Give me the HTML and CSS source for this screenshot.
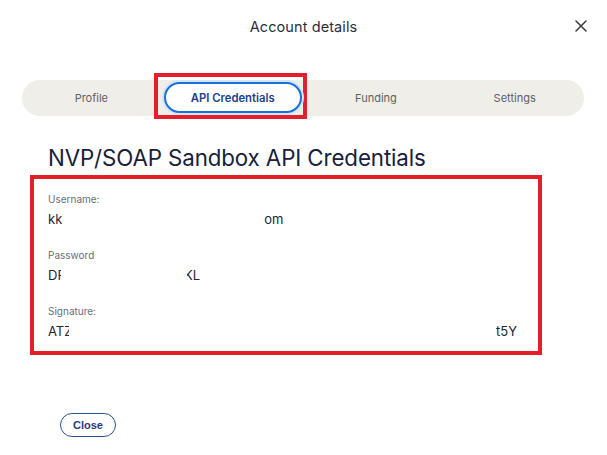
FILE: index.html
```html
<!DOCTYPE html>
<html lang="en">
<head>
<meta charset="utf-8">
<title>Account details</title>
<link rel="stylesheet" href="styles.css">
</head>
<body>
<div class="dialog">
  <header class="header">
    <span></span>
    <h1 class="title">Account details</h1>
    <button class="x-btn" aria-label="Close">
      <svg width="12" height="12" viewBox="0 0 12 12"><path d="M1 1L11 11M11 1L1 11" stroke="#3a3a3a" stroke-width="1.5" stroke-linecap="round"/></svg>
    </button>
  </header>

  <nav class="tabs">
    <div class="tab">Profile</div>
    <div class="tab tab-active-wrap">
      <div class="highlight"><div class="tab-active">API Credentials</div></div>
    </div>
    <div class="tab">Funding</div>
    <div class="tab">Settings</div>
  </nav>

  <h2 class="heading">NVP/SOAP Sandbox API Credentials</h2>

  <section class="creds">
    <div class="field">
      <div class="label">Username:</div>
      <div class="value"><span class="seg">kk</span><span class="gap g1"></span><span class="seg">om</span></div>
    </div>
    <div class="field">
      <div class="label">Password</div>
      <div class="value"><span class="seg clip1">DF</span><span class="gap g2"></span><span class="seg clip2">KL</span></div>
    </div>
    <div class="field">
      <div class="label">Signature:</div>
      <div class="value"><span class="seg clip3">ATZ</span><span class="gap g3"></span><span class="seg">t5Y</span></div>
    </div>
  </section>

  <footer class="footer">
    <button class="close-btn">Close</button>
  </footer>
</div>
</body>
</html>
```

FILE: styles.css
```css
* { box-sizing: border-box; }
html, body { margin: 0; padding: 0; background: #ffffff; }
body {
  font-family: Inter, "Noto Sans", "Liberation Sans", sans-serif;
  color: #1c1f2e;
  width: 607px;
  height: 455px;
  overflow: hidden;
}
.dialog { display: flex; flex-direction: column; }

.header {
  display: grid;
  grid-template-columns: 1fr auto 1fr;
  align-items: center;
  height: 52px;
  padding: 0 20px;
}
.title {
  margin: 0;
  font-size: 14.5px;
  font-weight: 400;
  color: #2b2e3b;
  letter-spacing: 0.1px;
}
.x-btn {
  justify-self: end;
  border: 0;
  background: none;
  padding: 0;
  width: 12px;
  height: 12px;
  display: flex;
}

.tabs {
  margin: 28px 23px 0 22px;
  height: 36px;
  background: #f0eee9;
  border-radius: 18px;
  display: grid;
  grid-template-columns: repeat(4, 1fr);
  grid-template-rows: 36px;
  align-items: center;
}
.tab {
  text-align: center;
  font-size: 11px;
  color: #5f6166;
  display: flex;
  justify-content: center;
  align-items: center;
}
.highlight {
  border: 4px solid #e3202a;
  padding: 5px 1px 2px 6px;
  margin: -4px 0 0 -7px;
}
.tab-active {
  width: 138px;
  height: 31px;
  border: 2px solid #1a6fd8;
  border-radius: 16px;
  background: #ffffff;
  box-shadow: 0 0 0 2px #d3e5fb;
  color: #1e3e8c;
  font-weight: 600;
  font-size: 11.3px;
  display: flex;
  align-items: center;
  justify-content: center;
}

.heading {
  margin: 29px 0 0 48px;
  font-size: 22.3px;
  font-weight: 400;
  color: #18203a;
  letter-spacing: -0.1px;
  line-height: 26px;
}

.creds {
  margin: 4px 0 0 30px;
  width: 512px;
  height: 180px;
  border: 4px solid #e3202a;
  padding: 14px 14px 0 14px;
  display: flex;
  flex-direction: column;
  gap: 22px;
}
.label {
  font-size: 10px;
  color: #6b6e75;
  line-height: 12px;
}
.value {
  margin-top: 7px;
  font-size: 13px;
  color: #23262f;
  line-height: 15px;
  display: flex;
  white-space: nowrap;
}
.seg { display: inline-block; overflow: hidden; }
.gap { display: inline-block; }
.g1 { width: 202px; }
.clip1 { width: 13px; }
.g2 { width: 126px; }
.clip2 { width: 13px; text-indent: -3px; }
.clip3 { width: 21px; }
.g3 { width: 427px; }

.footer {
  margin: 58px 0 0 60px;
}
.close-btn {
  width: 56px;
  height: 24px;
  border: 1.5px solid #2b4f93;
  border-radius: 12px;
  background: #ffffff;
  color: #1f3b7d;
  font-family: "Liberation Sans", Arial, sans-serif;
  font-weight: 700;
  font-size: 11px;
  padding: 0;
}
```
